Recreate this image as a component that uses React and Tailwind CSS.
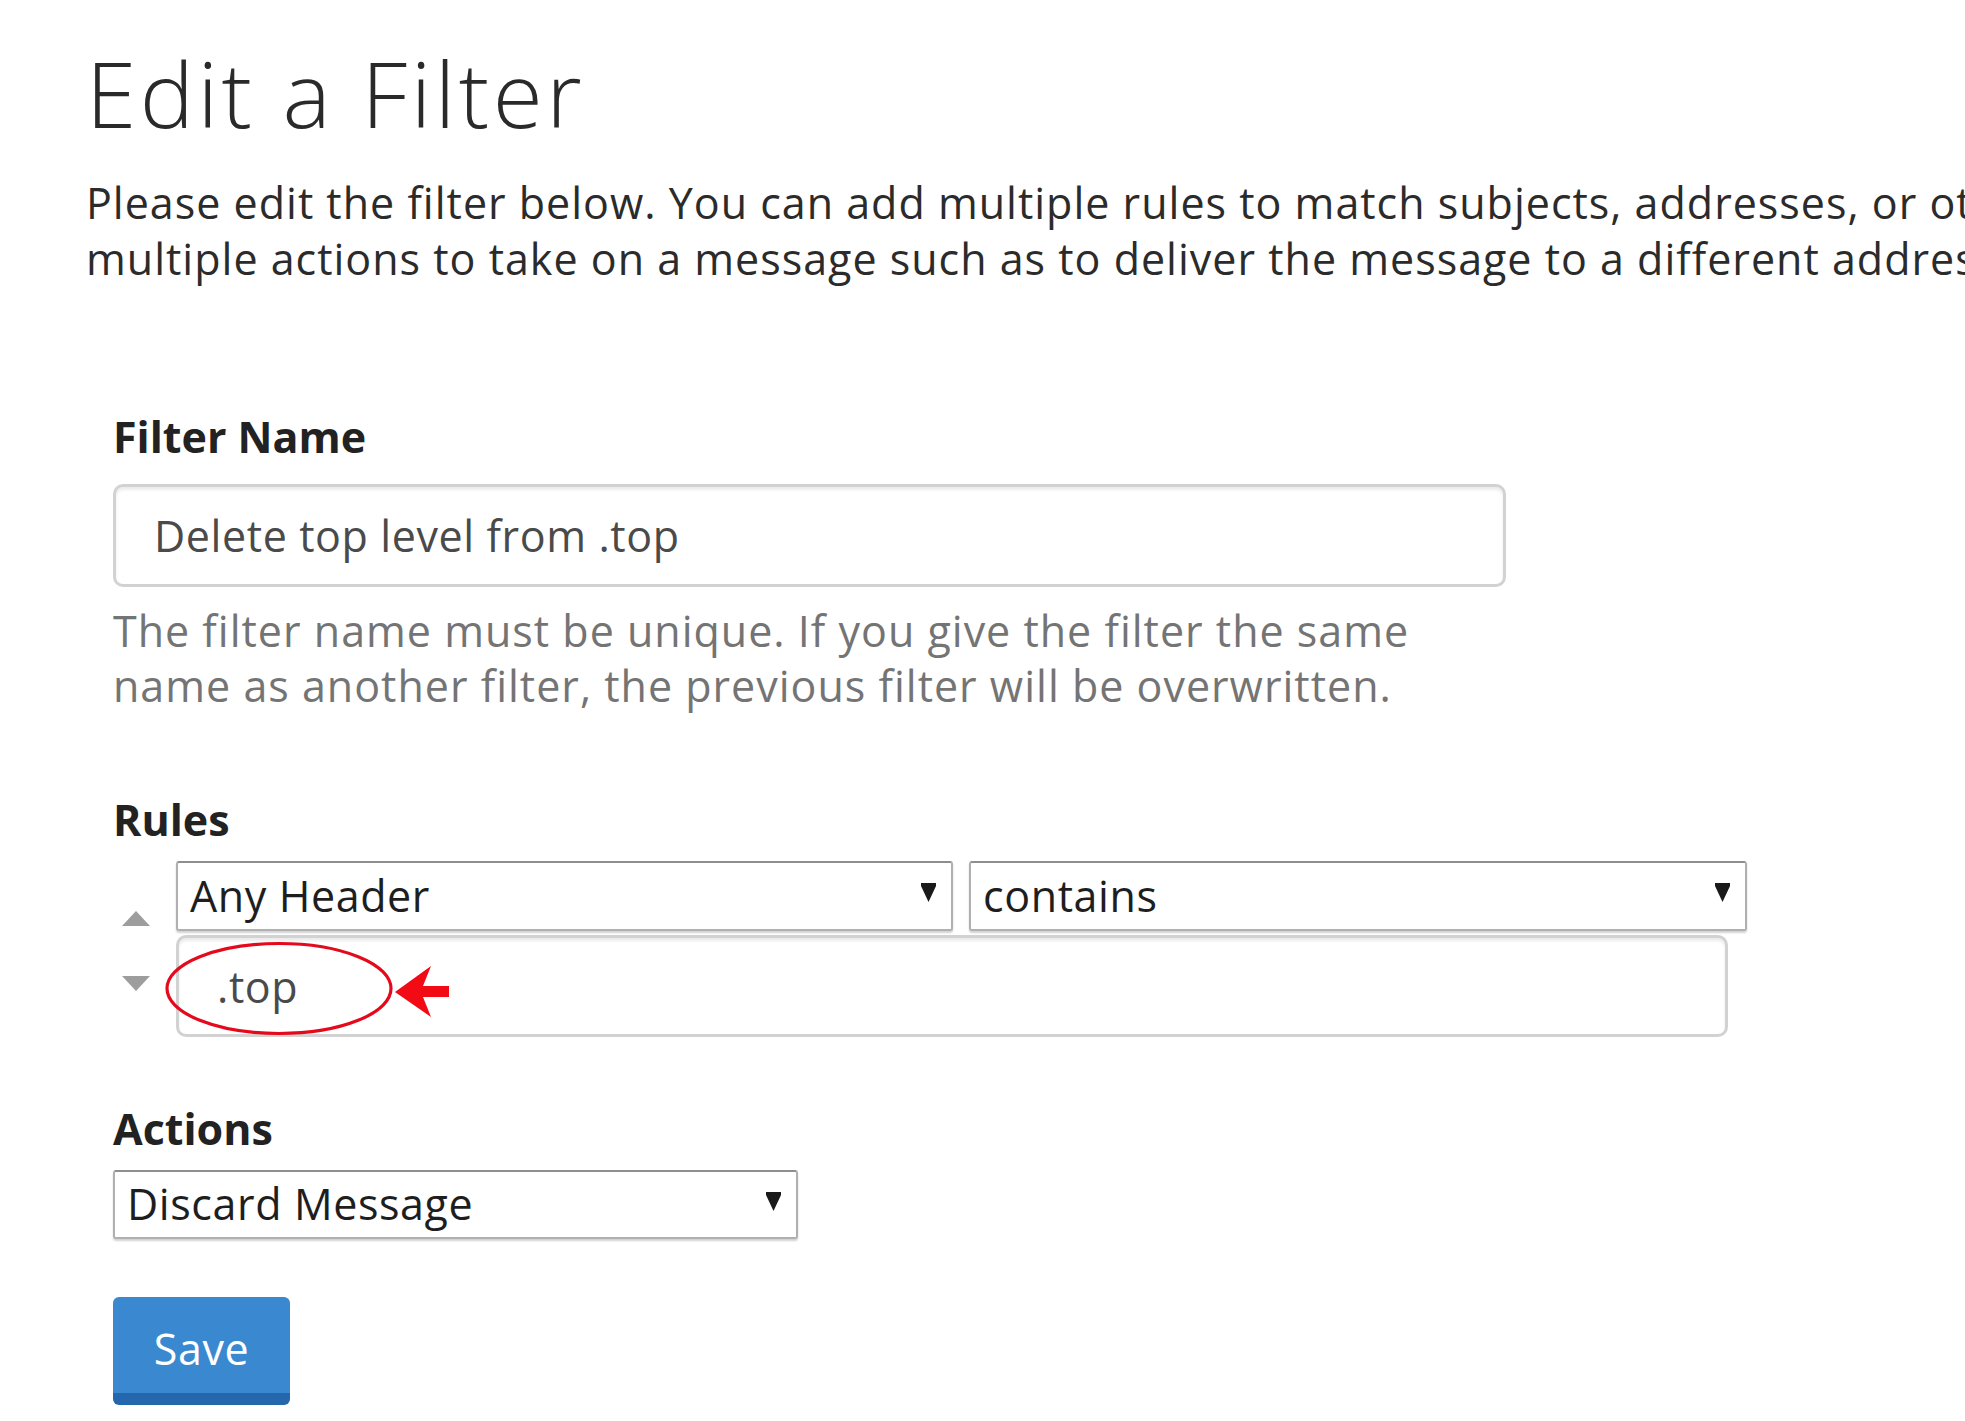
import React from "react";

const Caret = () => (
  <svg
    className="pointer-events-none absolute right-[17px] top-[22px]"
    width="15"
    height="19"
    viewBox="0 0 15 19"
  >
    <polygon points="0,0 15,0 15,3 7.5,19 0,3" fill="#1a1a1a" />
  </svg>
);

const Dropdown = ({ value, options, className }) => (
  <div className={"relative " + className}>
    <select
      defaultValue={value}
      className="h-full w-full appearance-none rounded-[3px] border-2 border-[#b0b0b0] border-t-[#8e8e8e] bg-white pl-[12px] text-[43px] tracking-[0.6px] text-[#1e1e1e] shadow-[0_2px_2px_rgba(0,0,0,0.18)] outline-none"
    >
      {options.map((o) => (
        <option key={o}>{o}</option>
      ))}
    </select>
    <Caret />
  </div>
);

const App = () => {
  return (
    <div className="min-h-screen w-full overflow-hidden bg-white font-['Open_Sans',sans-serif] text-[#333]">
      <div className="pl-[86px] pt-[43px] pb-[20px]">
        <h1 className="text-[91px] font-light leading-[100px] tracking-[3.5px] text-[#2a2a2a]">Edit a Filter</h1>

        <p className="mt-[32px] whitespace-nowrap text-[43px] leading-[56px] tracking-[1px] text-[#2b2b2b]">
          Please edit the filter below. You can add multiple rules to match subjects, addresses, or other parts of the message. You can then add
          <br />
          multiple actions to take on a message such as to deliver the message to a different address and then discard it.
        </p>

        <form className="ml-[27px] mt-[122px]" onSubmit={(e) => e.preventDefault()}>
          {/* Filter Name */}
          <label className="block text-[43px] font-bold leading-[56px] text-[#222]">Filter Name</label>
          <input
            readOnly
            value="Delete top level from .top"
            className="mt-[19px] block h-[103px] w-[1393px] rounded-[10px] border-[3px] border-[#d2d2d2] bg-white pl-[38px] text-[43px] tracking-[0.6px] text-[#4a4a4a] shadow-[inset_0_3px_3px_rgba(0,0,0,0.08)] outline-none"
          />
          <p className="mt-[16px] w-[1393px] text-[43px] leading-[55px] tracking-[1px] text-[#747474]">
            The filter name must be unique. If you give the filter the same name as another filter, the previous filter will be overwritten.
          </p>

          {/* Rules */}
          <label className="mt-[79px] block text-[43px] font-bold leading-[56px] text-[#222]">Rules</label>
          <div className="mt-[13px] flex">
            <div className="flex w-[63px] flex-col pl-[9px] pt-[50px]">
              <svg width="28" height="15" viewBox="0 0 28 15">
                <polygon points="14,0 28,15 0,15" fill="#9d9d9d" />
              </svg>
              <svg className="mt-[50px]" width="28" height="15" viewBox="0 0 28 15">
                <polygon points="0,0 28,0 14,15" fill="#9d9d9d" />
              </svg>
            </div>
            <div className="flex flex-col">
              <div className="flex gap-[16px]">
                <Dropdown className="h-[70px] w-[777px]" value="Any Header" options={["Any Header", "From", "Subject", "To", "Reply Address", "Body"]} />
                <Dropdown className="h-[70px] w-[778px]" value="contains" options={["contains", "matches regex", "does not contain", "equals", "begins with", "ends with"]} />
              </div>
              <div className="relative mt-[4px]">
                <input
                  readOnly
                  value=".top"
                  className="block h-[102px] w-[1552px] rounded-[10px] border-[3px] border-[#d2d2d2] bg-white pl-[38px] text-[43px] tracking-[0.6px] text-[#4a4a4a] shadow-[inset_0_3px_3px_rgba(0,0,0,0.08)] outline-none"
                />
                {/* red annotation */}
                <svg
                  className="pointer-events-none absolute left-[-15px] top-[3px]"
                  width="295"
                  height="100"
                  viewBox="0 0 295 100"
                >
                  <ellipse cx="118" cy="50.5" rx="112" ry="45" fill="none" stroke="#e5091c" strokeWidth="3.2" />
                  <polygon
                    points="234,54 270,28 262,48 288,48 288,59 262,59 270,79"
                    fill="#f20a14"
                  />
                </svg>
              </div>
            </div>
          </div>

          {/* Actions */}
          <label className="mt-[64px] block text-[43px] font-bold leading-[56px] text-[#222]">Actions</label>
          <Dropdown className="mt-[13px] h-[69px] w-[685px]" value="Discard Message" options={["Discard Message", "Redirect to Email", "Fail with message", "Stop Processing Rules", "Deliver to Folder"]} />

          <button
            type="submit"
            className="mt-[58px] block h-[108px] w-[177px] rounded-[6px] border-b-[12px] border-[#2467ad] bg-[#3a88d0] pt-[8px] text-[43px] tracking-[0.6px] text-white"
          >
            Save
          </button>
        </form>
      </div>
    </div>
  );
};

export default App;
